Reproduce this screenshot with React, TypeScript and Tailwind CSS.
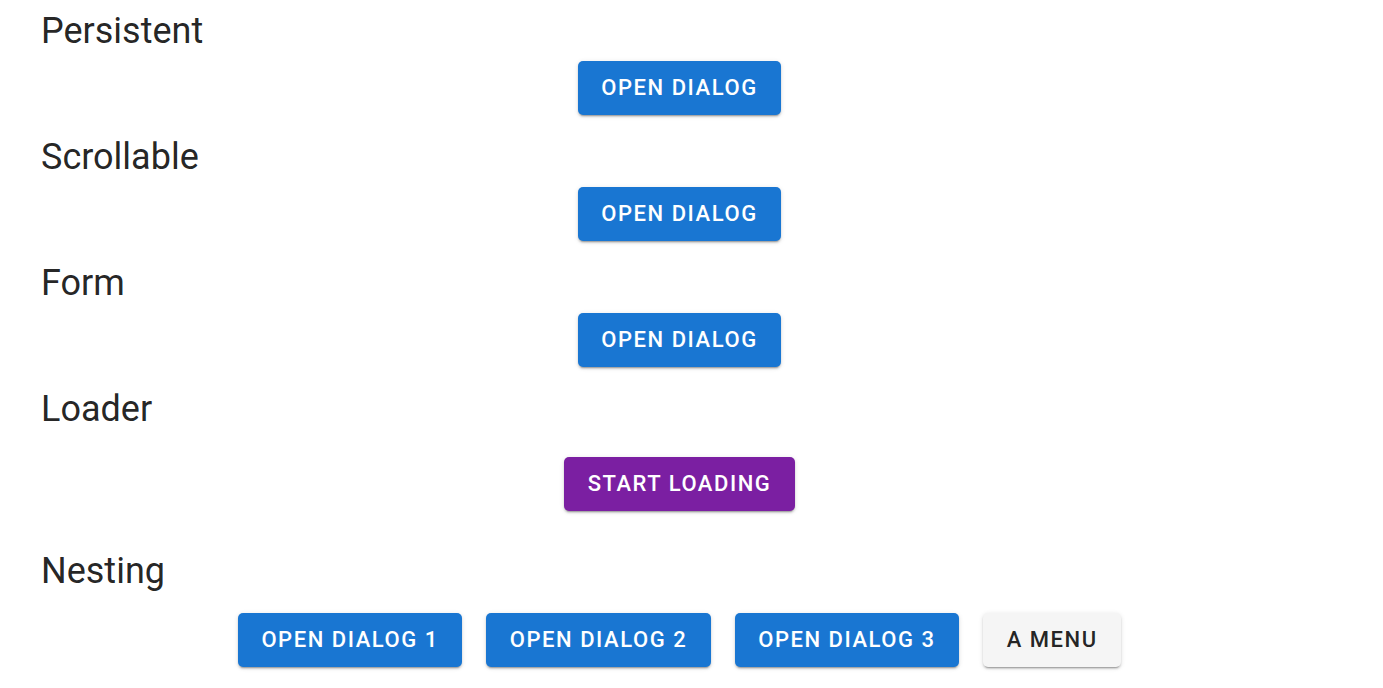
import type { ReactNode } from "react";

const shadow =
  "shadow-[0_3px_1px_-2px_rgba(0,0,0,0.2),0_2px_2px_0_rgba(0,0,0,0.14),0_1px_5px_0_rgba(0,0,0,0.12)]";

function Btn({ children, tone = "blue" }: { children: ReactNode; tone?: "blue" | "purple" | "grey" }) {
  const colors =
    tone === "blue"
      ? "bg-[#1976d2] text-white"
      : tone === "purple"
        ? "bg-[#7b1fa2] text-white"
        : "bg-[#f5f5f5] text-[rgba(0,0,0,0.87)]";
  return (
    <button
      className={`${colors} ${shadow} h-[54px] px-[23.5px] rounded-[5px] text-[22px] font-medium uppercase tracking-[0.07em] leading-none flex items-center justify-center whitespace-nowrap`}
    >
      {children}
    </button>
  );
}

function Heading({ children }: { children: ReactNode }) {
  return (
    <h2 className="text-[36px] leading-[44px] font-normal text-[rgba(0,0,0,0.87)]">
      {children}
    </h2>
  );
}

export default function App() {
  return (
    <div
      className="min-h-screen bg-white pl-[41px] pr-[65px] pt-[9px]"
      style={{ fontFamily: "Roboto, 'Liberation Sans', sans-serif" }}
    >
      <Heading>Persistent</Heading>
      <div className="flex justify-center mt-2 mb-5">
        <Btn>Open Dialog</Btn>
      </div>

      <Heading>Scrollable</Heading>
      <div className="flex justify-center mt-2 mb-5">
        <Btn>Open Dialog</Btn>
      </div>

      <Heading>Form</Heading>
      <div className="flex justify-center mt-2 mb-5">
        <Btn>Open Dialog</Btn>
      </div>

      <Heading>Loader</Heading>
      <div className="flex justify-center mt-[26px] mb-[38px]">
        <Btn tone="purple">Start Loading</Btn>
      </div>

      <Heading>Nesting</Heading>
      <div className="flex justify-center gap-6 mt-[20px]">
        <Btn>Open Dialog 1</Btn>
        <Btn>Open Dialog 2</Btn>
        <Btn>Open Dialog 3</Btn>
        <Btn tone="grey">A Menu</Btn>
      </div>
    </div>
  );
}
